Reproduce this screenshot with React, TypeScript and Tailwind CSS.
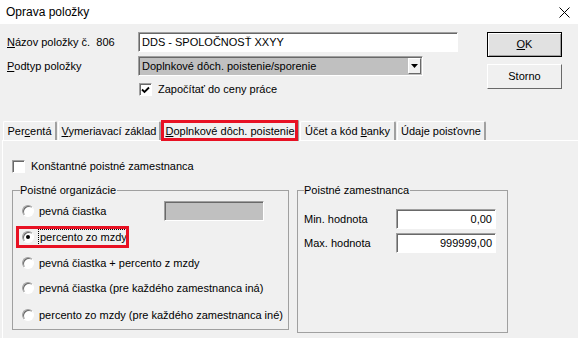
import React from "react";

const sunken =
  "border border-t-[#a0a0a0] border-l-[#a0a0a0] border-b-white border-r-white shadow-[inset_1px_1px_0_#696969]";

function Radio({ checked }: { checked?: boolean }) {
  return (
    <span className="relative flex h-[12px] w-[12px] shrink-0 items-center justify-center rounded-full border border-t-[#a0a0a0] border-l-[#a0a0a0] border-b-white border-r-white bg-white shadow-[inset_1px_1px_0_#696969]">
      {checked && <span className="h-[4px] w-[4px] rounded-full bg-black" />}
    </span>
  );
}

function Tab({ children, w }: { children: React.ReactNode; w: string }) {
  return (
    <div
      className={`flex h-[19px] ${w} items-center justify-center rounded-t-[2px] border-l border-t border-r-2 border-l-white border-t-white border-r-[#a0a0a0] whitespace-nowrap`}
    >
      {children}
    </div>
  );
}

export default function App() {
  return (
    <div className="h-[338px] w-[578px] overflow-hidden bg-[#f0f0f0] font-['Liberation_Sans',Arial,sans-serif] text-[11px] leading-none text-black">
      {/* Title bar */}
      <div className="flex h-[24px] items-center justify-between bg-white pl-[6px] pr-[8px]">
        <span className="text-[12px]">Oprava položky</span>
        <svg width="11" height="11" viewBox="0 0 11 11" className="mt-[1px]">
          <path d="M0.5 0.5 L10.5 10.5 M10.5 0.5 L0.5 10.5" stroke="#000" strokeWidth="1" />
        </svg>
      </div>

      {/* Header fields */}
      <div className="flex pt-[8px]">
        <div className="w-[487px]">
          <div className="flex h-[20px] items-center">
            <span className="w-[138px] shrink-0 pl-[7px]">
              <u>N</u>ázov položky č.&nbsp;&nbsp;806
            </span>
            <div className={`flex h-[20px] w-[320px] items-center bg-white pl-[3px] ${sunken}`}>
              DDS - SPOLOČNOSŤ XXYY
            </div>
          </div>
          <div className="mt-[4px] flex h-[20px] items-center">
            <span className="w-[138px] shrink-0 pl-[7px]">
              <u>P</u>odtyp položky
            </span>
            <div className={`flex h-[20px] w-[285px] items-center justify-between bg-[#c0c0c0] pl-[3px] pr-[1px] ${sunken}`}>
              <span>Doplnkové dôch. poistenie/sporenie</span>
              <span className="flex h-[16px] w-[13px] items-center justify-center border border-t-white border-l-white border-b-[#696969] border-r-[#696969] bg-[#f0f0f0]">
                <svg width="7" height="4" viewBox="0 0 7 4">
                  <path d="M0 0 H7 L3.5 4 Z" fill="#000" />
                </svg>
              </span>
            </div>
          </div>
          <div className="mt-[7px] flex items-center pl-[139px]">
            <span className={`flex h-[13px] w-[13px] items-center justify-center bg-white ${sunken}`}>
              <svg width="9" height="8" viewBox="0 0 9 8">
                <path d="M1 3.5 L3.5 6 L8 1.5" stroke="#000" strokeWidth="1.8" fill="none" />
              </svg>
            </span>
            <span className="ml-[6px]">Započítať do ceny práce</span>
          </div>
        </div>
        <div className="flex flex-col gap-[7px]">
          <button className="flex h-[25px] w-[75px] items-center justify-center border border-black bg-[#e1e1e1] shadow-[inset_1px_1px_0_#fff,inset_-1px_-1px_0_#a0a0a0]">
            <span>
              <u>O</u>K
            </span>
          </button>
          <button className="flex h-[25px] w-[75px] items-center justify-center border border-t-white border-l-white border-b-[#696969] border-r-[#696969] bg-[#f0f0f0]">
            Storno
          </button>
        </div>
      </div>

      {/* Tabs */}
      <div className="mt-[24px] flex items-end pl-[3px]">
        <Tab w="w-[54px]">
          Per<u>c</u>entá
        </Tab>
        <Tab w="w-[103px] ml-[1px]">
          <span>
            <u>V</u>ymeriavací základ
          </span>
        </Tab>
        <div className="relative z-10 -mb-px ml-[1px] flex h-[21px] w-[137px] items-center justify-center border-l border-t border-r-2 border-l-white border-t-white border-r-[#a0a0a0] bg-[#f0f0f0] whitespace-nowrap">
          <span>
            <u>D</u>oplnkové dôch. poistenie
          </span>
          <span className="absolute -left-[2px] -top-[1px] h-[21px] w-[137px] border-[3px] border-[#e81123]" />
        </div>
        <Tab w="w-[96px] ml-[1px]">
          <span>
            Účet a kód <u>b</u>anky
          </span>
        </Tab>
        <Tab w="w-[89px] ml-[1px]">Údaje poisťovne</Tab>
      </div>

      {/* Panel */}
      <div className="ml-[2px] h-[200px] border-l border-t border-l-white border-t-white pl-[9px] pt-[19px]">
        <div className="flex items-center">
          <span className={`h-[13px] w-[13px] bg-white ${sunken}`} />
          <span className="ml-[6px]">Konštantné poistné zamestnanca</span>
        </div>

        <div className="mt-[17px] flex items-start gap-[8px]">
          {/* Left group */}
          <div className="relative h-[140px] w-[277px] border border-[#a0a0a0] pl-[9px] pt-[10px]">
            <span className="absolute -top-[6px] left-[7px] bg-[#f0f0f0] pr-[1px]">Poistné organizácie</span>
            <div className="flex h-[20px] items-center">
              <Radio />
              <span className="ml-[5px] w-[125px]">pevná čiastka</span>
              <span className={`h-[20px] w-[100px] bg-[#c0c0c0] ${sunken}`} />
            </div>
            <div className="relative mt-[6px] flex h-[20px] items-center">
              <Radio checked />
              <span className="ml-[4px] border border-dotted border-black px-[1px] py-[2px]">percento zo mzdy</span>
              <span className="absolute -left-[6px] -top-[1px] h-[22px] w-[113px] border-[3px] border-[#e81123]" />
            </div>
            <div className="mt-[6px] flex h-[20px] items-center">
              <Radio />
              <span className="ml-[5px]">pevná čiastka + percento z mzdy</span>
            </div>
            <div className="mt-[5px] flex h-[20px] items-center">
              <Radio />
              <span className="ml-[5px]">pevná čiastka (pre každého zamestnanca iná)</span>
            </div>
            <div className="mt-[7px] flex h-[20px] items-center">
              <Radio />
              <span className="ml-[5px]">percento zo mzdy (pre každého zamestnanca iné)</span>
            </div>
          </div>

          {/* Right group */}
          <div className="relative h-[143px] w-[211px] border border-[#a0a0a0] pl-[6px] pt-[18px]">
            <span className="absolute -top-[6px] left-[6px] bg-[#f0f0f0] pr-[1px]">Poistné zamestnanca</span>
            <div className="flex h-[20px] items-center">
              <span className="w-[92px]">Min. hodnota</span>
              <span className={`flex h-[20px] w-[100px] items-center justify-end bg-white pr-[3px] ${sunken}`}>0,00</span>
            </div>
            <div className="mt-[4px] flex h-[20px] items-center">
              <span className="w-[92px]">Max. hodnota</span>
              <span className={`flex h-[20px] w-[100px] items-center justify-end bg-white pr-[3px] ${sunken}`}>999999,00</span>
            </div>
          </div>
        </div>
      </div>
    </div>
  );
}
